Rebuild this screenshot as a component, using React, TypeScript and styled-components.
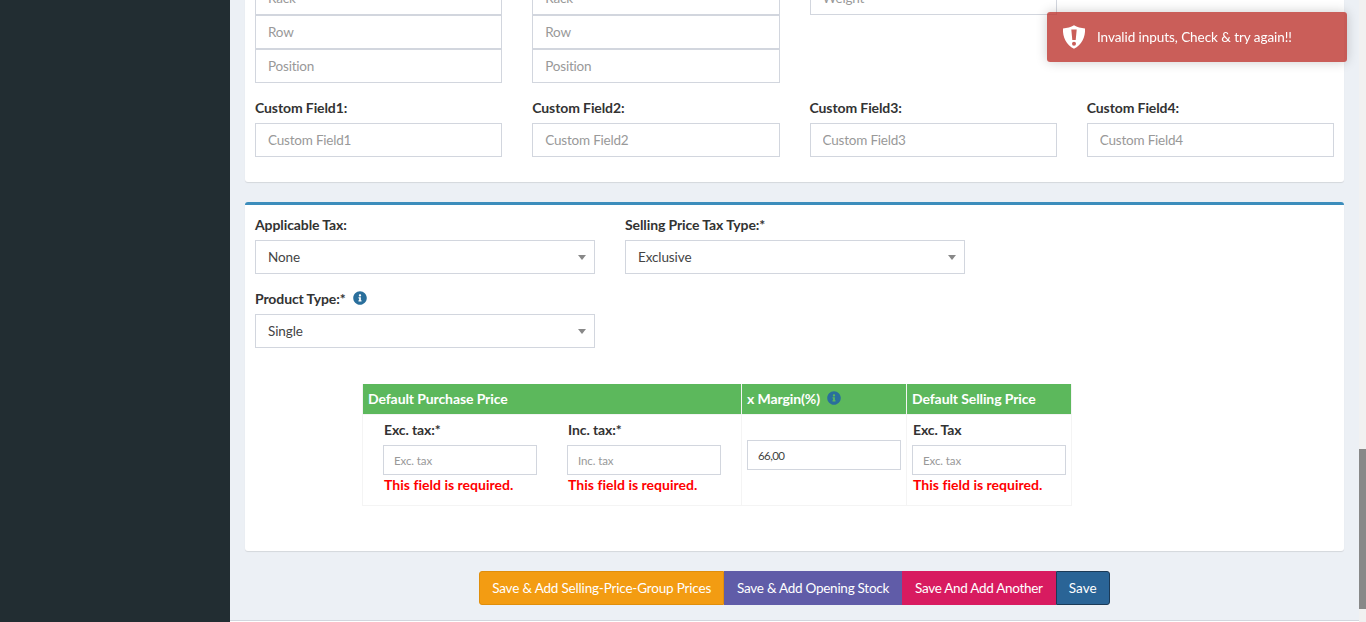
import React from "react";
import styled, { createGlobalStyle } from "styled-components";
import { FaInfoCircle } from "react-icons/fa";

const Global = createGlobalStyle`
  html, body { margin: 0; padding: 0; height: 622px; overflow: hidden; }
  body { font-family: "Lato", "Liberation Sans", sans-serif; font-size: 14px; color: #333; }
  * { box-sizing: border-box; }
`;
const Shell = styled.div`display: flex; height: 622px; overflow: hidden; background: #ecf0f5;`;
const Sidebar = styled.aside`width: 230px; flex: none; background: #222d32;`;
const Main = styled.main`flex: 1; min-width: 0; display: flex; flex-direction: column; justify-content: flex-end; overflow: hidden;`;
const Content = styled.div`padding: 0 15px; display: flex; flex-direction: column;`;
const Footer = styled.footer`height: 2px; flex: none; background: #fff; border-top: 1px solid #d2d6de;`;
const Box = styled.section<{ $accent?: boolean }>`
  background: #fff; border-radius: 3px; box-shadow: 0 1px 1px rgba(0,0,0,.1);
  padding: 10px; margin-bottom: 20px;
  ${(p) => p.$accent && "border-top: 3px solid #3c8dbc;"}
`;
const FourCols = styled.div`display: grid; grid-template-columns: repeat(4, 1fr); column-gap: 30px;`;
const Stack = styled.div`display: flex; flex-direction: column; margin-bottom: 15px; min-width: 0;`;
const Group = styled.div`margin-bottom: 15px; min-width: 0;`;
const Label = styled.label`display: block; font-weight: 700; line-height: 20px; margin-bottom: 5px; color: #333; letter-spacing: -.1px;`;
const Input = styled.input<{ $small?: boolean }>`
  display: block; width: 100%; height: ${(p) => (p.$small ? 30 : 34)}px;
  border: 1px solid #d2d6de; border-radius: 0; outline: none; background: #fff;
  padding: 0 ${(p) => (p.$small ? 10 : 12)}px; color: #555;
  font: ${(p) => (p.$small ? 11.5 : 13.5)}px "Lato", sans-serif;
  letter-spacing: ${(p) => (p.$small ? "-.1px" : "-.2px")};
  &::placeholder { color: #999; opacity: 1; }
`;
const ValueInput = styled(Input)`letter-spacing: -.6px; color: #444;`;
const TaxRow = styled.div`display: grid; grid-template-columns: 340px 340px; column-gap: 30px;`;
const Select = styled.div`
  position: relative; height: 34px; border: 1px solid #d2d6de; background: #fff;
  padding: 0 12px; line-height: 32px; color: #444; font-size: 13.5px; letter-spacing: -.1px;
  &::after {
    content: ""; position: absolute; right: 8px; top: 14px;
    border-style: solid; border-width: 5px 4px 0 4px; border-color: #888 transparent transparent transparent;
  }
`;
const Tip = styled(FaInfoCircle)`color: #2a6f9c; font-size: 14px; margin-left: 4px; vertical-align: -1px;`;
const PriceTable = styled.table`
  width: 709px; margin: 21px 0 35px 107px; border-collapse: collapse; table-layout: fixed;
`;
const Th = styled.th`
  background: #5cb85c; color: #fff; height: 31px; padding: 0 5px; text-align: left; font-weight: 700;
  line-height: 20px; border-left: 1px solid #f4f4f4; border-right: 1px solid #f4f4f4; letter-spacing: -.1px;
`;
const Td = styled.td<{ $top?: number }>`
  border: 1px solid #f4f4f4; vertical-align: top; padding: ${(p) => p.$top ?? 5}px 5px 10px; height: 90px;
`;
const Pair = styled.div`display: grid; grid-template-columns: 154px 154px; column-gap: 30px; padding-left: 15px;`;
const CellLabel = styled(Label)`padding-left: 1px; margin-bottom: 5px;`;
const Err = styled.div`color: #f00; font-weight: 700; line-height: 20px; padding-left: 1px; letter-spacing: .02px;`;
const Actions = styled.div`display: flex; justify-content: center; margin-bottom: 15px;`;
const Btn = styled.button<{ $bg: string; $edge: string; $track: number; $pos?: "first" | "last" }>`
  height: 34px; padding: 0 12px; border: 1px solid ${(p) => p.$edge}; background: ${(p) => p.$bg};
  color: #fff; font: 13.5px "Lato", sans-serif; letter-spacing: ${(p) => p.$track}px; white-space: nowrap;
  border-radius: ${(p) => (p.$pos === "first" ? "3px 0 0 3px" : p.$pos === "last" ? "0 3px 3px 0" : "0")};
`;
const Scrollbar = styled.div`width: 7px; flex: none; background: #f1f1f1; padding-top: 449px;`;
const Thumb = styled.div`height: 160px; background: #888;`;
const Toast = styled.div`
  position: fixed; top: 12px; left: 1047px; width: 300px; height: 50px; padding-left: 15px;
  display: flex; align-items: center; gap: 11px; border-radius: 3px;
  background: rgba(189, 54, 47, .8); color: #fff; box-shadow: 0 0 12px rgba(0,0,0,.2);
  font-size: 13.5px; letter-spacing: -.06px;
`;

const ShieldIcon = () => (
  <svg width="24" height="24" viewBox="0 0 24 24" aria-hidden="true">
    <path
      fill="#fff"
      fillRule="evenodd"
      d="M12 .2C15 2 19 3 23 3.400 23.600 12 19.500 20 12 23.800 4.500 20 .4 12 1 3.400 5 3 9 2 12 .2ZM9.300 4.500l1 10.500h3.400l1-10.500H9.300ZM12 16.700a2 2 0 1 0 0 4 2 2 0 0 0 0-4Z"
    />
  </svg>
);

export default function App() {
  return (
    <Shell>
      <Global />
      <Sidebar />
      <Main>
        <Content>
          <Box>
            <FourCols>
              <Stack>
                <Input placeholder="Rack" />
                <Input placeholder="Row" />
                <Input placeholder="Position" />
              </Stack>
              <Stack>
                <Input placeholder="Rack" />
                <Input placeholder="Row" />
                <Input placeholder="Position" />
              </Stack>
              <Stack>
                <Input placeholder="Weight" />
              </Stack>
              <div />
              {[1, 2, 3, 4].map((n) => (
                <Group key={n}>
                  <Label>{`Custom Field${n}:`}</Label>
                  <Input placeholder={`Custom Field${n}`} />
                </Group>
              ))}
            </FourCols>
          </Box>
          <Box $accent>
            <TaxRow>
              <Group>
                <Label>Applicable Tax:</Label>
                <Select>None</Select>
              </Group>
              <Group>
                <Label>Selling Price Tax Type:*</Label>
                <Select>Exclusive</Select>
              </Group>
              <Group>
                <Label>Product Type:* <Tip /></Label>
                <Select>Single</Select>
              </Group>
            </TaxRow>
            <PriceTable>
              <colgroup>
                <col style={{ width: 379 }} />
                <col style={{ width: 165 }} />
                <col style={{ width: 165 }} />
              </colgroup>
              <thead>
                <tr>
                  <Th>Default Purchase Price</Th>
                  <Th>x Margin(%) <Tip /></Th>
                  <Th>Default Selling Price</Th>
                </tr>
              </thead>
              <tbody>
                <tr>
                  <Td>
                    <Pair>
                      <div>
                        <CellLabel>Exc. tax:*</CellLabel>
                        <Input $small placeholder="Exc. tax" />
                        <Err>This field is required.</Err>
                      </div>
                      <div>
                        <CellLabel>Inc. tax:*</CellLabel>
                        <Input $small placeholder="Inc. tax" />
                        <Err>This field is required.</Err>
                      </div>
                    </Pair>
                  </Td>
                  <Td $top={25}>
                    <ValueInput $small defaultValue="66,00" />
                  </Td>
                  <Td>
                    <CellLabel>Exc. Tax</CellLabel>
                    <Input $small placeholder="Exc. tax" />
                    <Err>This field is required.</Err>
                  </Td>
                </tr>
              </tbody>
            </PriceTable>
          </Box>
          <Actions>
            <Btn $bg="#f39c12" $edge="#e08e0b" $track={-0.18} $pos="first">Save &amp; Add Selling-Price-Group Prices</Btn>
            <Btn $bg="#605ca8" $edge="#605ca8" $track={-0.26}>Save &amp; Add Opening Stock</Btn>
            <Btn $bg="#d81b60" $edge="#d81b60" $track={-0.3}>Save And Add Another</Btn>
            <Btn $bg="#2a6496" $edge="#1b3a57" $track={0.1} $pos="last">Save</Btn>
          </Actions>
        </Content>
        <Footer />
      </Main>
      <Scrollbar><Thumb /></Scrollbar>
      <Toast>
        <ShieldIcon />
        <span>Invalid inputs, Check &amp; try again!!</span>
      </Toast>
    </Shell>
  );
}
